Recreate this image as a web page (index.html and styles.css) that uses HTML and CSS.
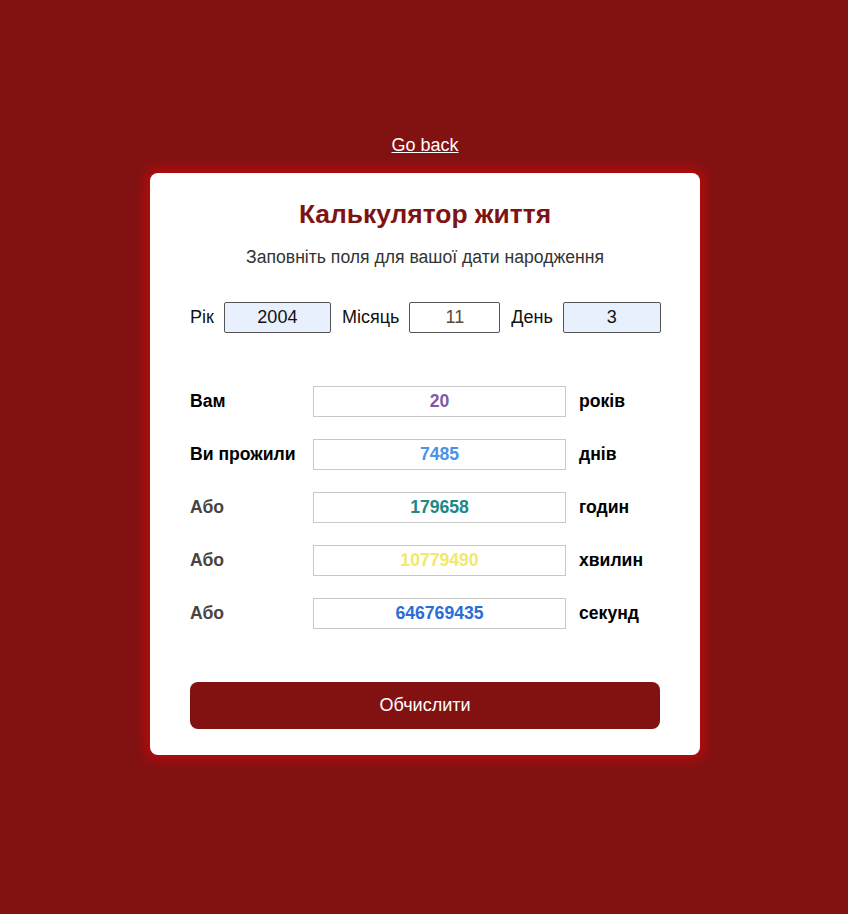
FILE: index.html
```html
<!DOCTYPE html>
<html lang="uk">
<head>
<meta charset="utf-8">
<title>Калькулятор життя</title>
<link rel="stylesheet" href="styles.css">
</head>
<body>
<div class="page">
  <a class="back" href="#">Go back</a>
  <div class="card">
    <h1 class="title">Калькулятор життя</h1>
    <p class="subtitle">Заповніть поля для вашої дати народження</p>
    <div class="date-row">
      <label class="date-label">Рік</label>
      <input class="date-input year autofill" type="text" value="2004">
      <label class="date-label">Місяць</label>
      <input class="date-input month" type="text" value="11">
      <label class="date-label">День</label>
      <input class="date-input day autofill" type="text" value="3">
    </div>
    <div class="results">
      <div class="row">
        <span class="lbl">Вам</span>
        <input class="out c-years" type="text" value="20" readonly>
        <span class="unit">років</span>
      </div>
      <div class="row">
        <span class="lbl">Ви прожили</span>
        <input class="out c-days" type="text" value="7485" readonly>
        <span class="unit">днів</span>
      </div>
      <div class="row">
        <span class="lbl muted">Або</span>
        <input class="out c-hours" type="text" value="179658" readonly>
        <span class="unit">годин</span>
      </div>
      <div class="row">
        <span class="lbl muted">Або</span>
        <input class="out c-minutes" type="text" value="10779490" readonly>
        <span class="unit">хвилин</span>
      </div>
      <div class="row">
        <span class="lbl muted">Або</span>
        <input class="out c-seconds" type="text" value="646769435" readonly>
        <span class="unit">секунд</span>
      </div>
    </div>
    <button class="calc" type="button">Обчислити</button>
  </div>
</div>
</body>
</html>
```
FILE: styles.css
```css
html, body {
  margin: 0;
  padding: 0;
}
body {
  background: #821212;
  font-family: "Liberation Sans", Arial, sans-serif;
  min-height: 914px;
}
.page {
  display: flex;
  flex-direction: column;
  align-items: center;
  padding-top: 135px;
  padding-left: 2px;
}
.back {
  color: #ffffff;
  font-size: 18px;
  line-height: 21px;
  text-decoration: underline;
}
.card {
  margin-top: 17px;
  width: 550px;
  box-sizing: border-box;
  background: #ffffff;
  border-radius: 8px;
  padding: 26px 40px 26px;
  box-shadow: 0 0 12px 5px #b40c0c;
}
.title {
  margin: 0;
  text-align: center;
  color: #7d1313;
  font-size: 26.4px;
  line-height: 30px;
  font-weight: bold;
}
.subtitle {
  margin: 18px 0 0;
  text-align: center;
  color: #333333;
  font-size: 17.6px;
  line-height: 20px;
}
.date-row {
  display: flex;
  align-items: center;
  margin-top: 35px;
}
.date-label {
  font-size: 18px;
  color: #111;
  margin-right: 10px;
}
.date-input {
  box-sizing: border-box;
  height: 31px;
  border: 1px solid #555;
  border-radius: 2px;
  background: #ffffff;
  font-family: "Liberation Sans", Arial, sans-serif;
  font-size: 18px;
  text-align: center;
  color: #111;
  padding: 0;
  margin-right: 11px;
}
.date-input.autofill {
  background: #e8f0fe;
}
.date-input.year { width: 107px; }
.date-input.month { width: 91px; color: #5a4a3a; }
.date-input.day { width: 98px; margin-right: 1px; margin-left: auto; }
.results {
  margin-top: 53px;
  display: flex;
  flex-direction: column;
  gap: 22px;
}
.row {
  display: grid;
  grid-template-columns: 123px 253px 1fr;
  align-items: center;
}
.lbl {
  font-size: 17.6px;
  font-weight: bold;
  color: #000;
}
.lbl.muted {
  color: #4a4343;
}
.unit {
  font-size: 17.6px;
  font-weight: bold;
  color: #000;
  padding-left: 13px;
}
.out {
  box-sizing: border-box;
  width: 253px;
  height: 31px;
  border: 1px solid #c8c8c8;
  border-radius: 0;
  background: #fff;
  text-align: center;
  font-family: "Liberation Sans", Arial, sans-serif;
  font-size: 17.6px;
  font-weight: bold;
  padding: 0;
  outline: none;
}
.c-years { color: #7b5aa8; }
.c-days { color: #4a92ea; }
.c-hours { color: #208686; }
.c-minutes { color: #f2e86a; }
.c-seconds { color: #2a6dd6; }
.calc {
  display: block;
  width: 100%;
  margin-top: 53px;
  height: 47px;
  border: none;
  border-radius: 8px;
  background: #821212;
  color: #ffffff;
  font-family: "Liberation Sans", Arial, sans-serif;
  font-size: 18px;
  cursor: pointer;
}
```
